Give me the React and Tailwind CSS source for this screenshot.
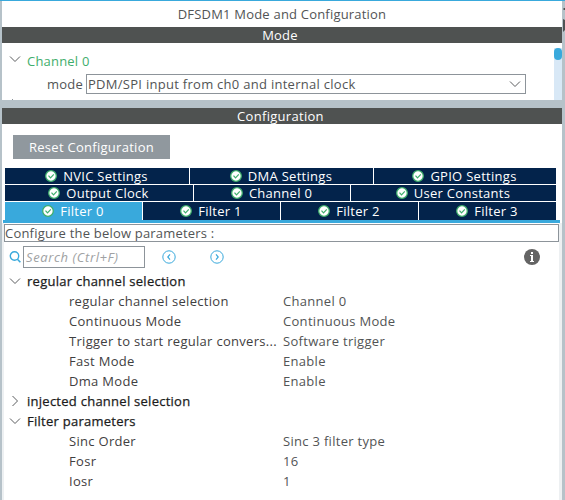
function CheckIcon() {
  return (
    <svg className="size-3 shrink-0" viewBox="0 0 12 12" fill="none">
      <circle cx="6" cy="6" r="5.3" fill="#fff" stroke="#3fae6c" strokeWidth="1.3" />
      <path d="M3.5 5.7 5.5 7.8 8.8 4.3" stroke="#3fae6c" strokeWidth="1.2" />
    </svg>
  );
}

function Chevron({ open = true, className = "" }) {
  return (
    <svg className={`h-3 w-3 shrink-0 ${className}`} viewBox="0 0 12 12" fill="none" stroke="#5b5d5f" strokeWidth="1">
      <path d={open ? "M1 3.5 6 8.5 11 3.5" : "M3.5 1 8.5 6 3.5 11"} />
    </svg>
  );
}

function Tab({ label, active = false, className = "" }) {
  return (
    <div className={`flex items-center justify-center gap-[6px] pr-px text-white ${active ? "bg-[#39a9dc]" : "bg-[#03234b]"} ${className}`}>
      <CheckIcon />
      <span className="tracking-[0.28px]">{label}</span>
    </div>
  );
}

function Group({ label, open = true, children }) {
  return (
    <div>
      <div className="flex h-5 items-center gap-[6px] pl-[5px] text-[#1c1c1c]">
        <Chevron open={open} />
        <span className="tracking-[0.26px] [-webkit-text-stroke:0.25px_#1c1c1c]">{label}</span>
      </div>
      {children}
    </div>
  );
}

function Param({ name, value }) {
  return (
    <div className="flex h-5 items-center pl-[65px] tracking-[0.3px]">
      <span className="w-[214px] text-[#3f4041]">{name}</span>
      <span>{value}</span>
    </div>
  );
}

export default function App() {
  return (
    <div className="h-[500px] w-[565px] overflow-hidden whitespace-nowrap bg-[#b6c2c9] font-['Open_Sans',sans-serif] text-[13px] leading-4 tracking-[0.2px] text-[#525455]">
      <div className="flex h-[100px] flex-col border-t border-[#39a9dc]">
        <div className="relative ml-[2px] mr-[3px] flex-1 bg-white">
          <div className="flex h-[26px] items-center justify-center">DFSDM1 Mode and Configuration</div>
          <div className="flex h-4 items-center justify-center bg-[#4f5251] pr-1 text-white">Mode</div>
          <div className="flex h-[57px]">
            <div className="flex-1">
              <div className="flex h-[31px] items-center gap-[6px] pl-[7px] pt-1 text-[#3fae6c]">
                <Chevron className="-mt-1" />
                <span>Channel 0</span>
              </div>
              <div className="flex items-center gap-[3px] pl-[45px]">
                <span className="w-9">mode</span>
                <div className="flex h-5 w-[440px] items-center justify-between border border-[#8d949a] pl-[1px] pr-1">
                  <span className="tracking-[0.28px]">PDM/SPI input from ch0 and internal clock</span>
                  <Chevron />
                </div>
              </div>
            </div>
            <div className="mt-[5px] w-2 bg-[#d8e8f6]">
              <div className="h-3 rounded-full bg-[#39a9dc]" />
            </div>
          </div>
          <div className="absolute bottom-0 left-[10px] h-px w-px bg-[#8d949a]" />
        </div>
      </div>
      <svg className="absolute left-[562px] top-0 h-8 w-[3px]" viewBox="0 0 3 32">
        <path d="M1 9 2 8H3V10H2ZM1 19 3 20V30L1 32Z" fill="#505355" />
      </svg>

      <div className="ml-[2px] mr-[3px] mt-2 flex h-[392px] flex-col bg-white">
        <div className="flex h-4 items-center justify-center bg-[#4f5251] pr-[3px] tracking-[0.3px] text-white">Configuration</div>
        <div className="pl-[11px] pt-[11px]">
          <button className="block h-6 w-[157px] bg-[#90989e] text-center tracking-[0.28px] text-white">Reset Configuration</button>
        </div>
        <div className="mt-[9px] flex flex-col gap-px pl-[3px] pr-[6px]">
          <div className="flex h-4 gap-px">
            <Tab label="NVIC Settings" className="w-[184px]" />
            <Tab label="DMA Settings" className="w-[183px]" />
            <Tab label="GPIO Settings" className="flex-1" />
          </div>
          <div className="flex h-4 gap-px">
            <Tab label="Output Clock" className="w-[188px]" />
            <Tab label="Channel 0" className="w-[156px]" />
            <Tab label="User Constants" className="flex-1" />
          </div>
          <div className="flex h-[18px] gap-px">
            <Tab label="Filter 0" active className="w-[137px]" />
            <Tab label="Filter 1" className="w-[137px]" />
            <Tab label="Filter 2" className="w-[137px]" />
            <Tab label="Filter 3" className="flex-1" />
          </div>
        </div>
        <div className="ml-px mr-[2px] h-[3px] bg-[#39a9dc]" />
        <div className="flex-1 border-l-2 border-r-[3px] border-[#edf0f2] pt-px">
          <div className="flex h-[18px] items-center border border-[#8d949a] tracking-[0.2px]">Configure the below parameters :</div>
          <div className="flex h-[29px] items-center pl-[5px]">
            <svg className="h-3 w-3" viewBox="0 0 12 12" fill="none" stroke="#39a9dc">
              <circle cx="5.5" cy="5" r="4.2" strokeWidth="1.4" />
              <path d="m8.4 8.2 3 3" strokeWidth="1.6" />
            </svg>
            <div className="ml-[2px] flex h-[22px] w-[122px] items-center border border-[#8d949a] pl-[2px] italic tracking-[0.6px] text-[#a0a2a3]">Search (Ctrl+F)</div>
            <svg className="ml-[17px] size-[14px]" viewBox="0 0 14 14" fill="none" stroke="#39a9dc">
              <circle cx="7" cy="7" r="6.2" />
              <path d="M8 4.4 5.8 7l2.2 2.6" strokeWidth="1.2" />
            </svg>
            <svg className="ml-[34px] size-[14px]" viewBox="0 0 14 14" fill="none" stroke="#39a9dc">
              <circle cx="7" cy="7" r="6.2" />
              <path d="M6 4.4 8.2 7 6 9.6" strokeWidth="1.2" />
            </svg>
            <svg className="ml-[300px] size-4" viewBox="0 0 16 16">
              <circle cx="8" cy="8" r="8" fill="#646464" />
              <path d="M7 3h2v2H7ZM6 6h3v6h1v1H6v-1h1V7H6Z" fill="#fff" />
            </svg>
          </div>
          <Group label="regular channel selection">
            <Param name="regular channel selection" value="Channel 0" />
            <Param name="Continuous Mode" value="Continuous Mode" />
            <Param name="Trigger to start regular convers..." value="Software trigger" />
            <Param name="Fast Mode" value="Enable" />
            <Param name="Dma Mode" value="Enable" />
          </Group>
          <Group label="injected channel selection" open={false} />
          <Group label="Filter parameters">
            <Param name="Sinc Order" value="Sinc 3 filter type" />
            <Param name="Fosr" value="16" />
            <Param name="Iosr" value="1" />
          </Group>
        </div>
      </div>
    </div>
  );
}
